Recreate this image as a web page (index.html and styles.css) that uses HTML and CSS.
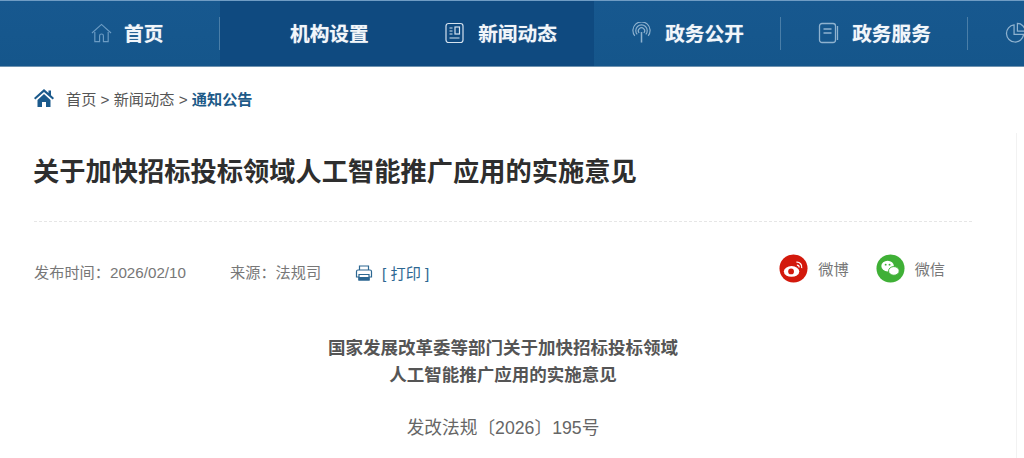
FILE: index.html
```html
<!DOCTYPE html>
<html lang="zh-CN">
<head>
    <meta charset="UTF-8">
    <title>关于加快招标投标领域人工智能推广应用的实施意见</title>
    <link rel="stylesheet" href="styles.css">
</head>
<body>
    <div class="nav">
        <div class="nav-item first sep">
            <svg class="nav-icon" viewBox="0 0 22 22" fill="none" stroke="#6c9cc4" stroke-width="1.2"><path d="M1 11 11 2l10 9"/><path d="M4 10v10h5v-6q0-2 2-2t2 2v6h5V10"/></svg>
            <span>首页</span>
        </div>
        <div class="nav-item dark plain"><span>机构设置</span></div>
        <div class="nav-item dark">
            <svg class="nav-icon" viewBox="0 0 20 22" fill="none" stroke="#d5e2ee" stroke-width="1.2"><rect x="1.5" y="1.5" width="17" height="19" rx="2.5"/><path d="M5 6h3M5 9h3M5 12h3M5 16h10"/><rect x="10.5" y="5" width="4.500" height="7"/></svg>
            <span>新闻动态</span>
        </div>
        <div class="nav-item sep">
            <svg class="nav-icon" viewBox="0 0 22 22" fill="none" stroke="#8fb2cf" stroke-width="1.2"><path d="M4 14a9 9 0 1 1 14 0"/><path d="M6.500 12.500a6 6 0 1 1 9 0"/><path d="M8.500 11a3.300 3.300 0 1 1 5 0"/><path d="M11 10v11" stroke-width="1.600"/></svg>
            <span>政务公开</span>
        </div>
        <div class="nav-item sep">
            <svg class="nav-icon" viewBox="0 0 20 22" fill="none" stroke="#8fb2cf" stroke-width="1.3"><rect x="1" y="1.500" width="16" height="19" rx="2.500"/><path d="M5 7h8M5 11h8M19 4v14"/></svg>
            <span>政务服务</span>
        </div>
        <div class="nav-item last">
            <svg class="nav-icon" viewBox="0 0 22 22" fill="none" stroke="#8fb2cf" stroke-width="1.3"><path d="M9.500 2.500a9 9 0 1 0 10 10h-10z"/><path d="M13 1v8h8a8 8 0 0 0-8-8z"/></svg>
        </div>
    </div>

    <div class="page">
        <div class="crumb">
            <svg class="crumb-icon" viewBox="0 0 20 18" fill="#1b5a8c"><path d="M10 0 0 9l1.300 1.400L10 3l8.700 7.400L20 9l-3-2.700V1.500h-2.500v2.500z"/><path d="M3.500 11 10 5l6.500 6v7h-4.500v-5H8v5H3.500z"/></svg>
            <span>首页 &gt; 新闻动态 &gt; </span><b>通知公告</b>
        </div>
        <h1 class="title">关于加快招标投标领域人工智能推广应用的实施意见</h1>
        <div class="meta">
            <span class="time">发布时间：2026/02/10</span>
            <span class="source">来源：法规司</span>
            <svg class="print-icon" viewBox="0 0 18 16" fill="none" stroke="#2c6792" stroke-width="1.200"><path d="M4.500 5V1h9v4"/><path d="M4 12H1.500V6.500q0-1.500 1.500-1.500h12q1.500 0 1.500 1.500V12H14"/><path d="M4 9.500h10V15H4z"/><path d="M4 12.500h10V15H4z" fill="#2c6792"/></svg>
            <span class="print">[ 打印 ]</span>
            <div class="share">
                <svg class="share-icon" viewBox="0 0 30 30"><circle cx="15" cy="15" r="14.500" fill="#d3190c"/><ellipse cx="13" cy="18" rx="8" ry="5.500" fill="#fff"/><circle cx="12.500" cy="18" r="3" fill="#d3190c"/><path d="M18 8.500a5 5 0 0 1 5.500 6M18.500 11.500a2.200 2.200 0 0 1 2.300 2.500" fill="none" stroke="#fff" stroke-width="1.300"/></svg>
                <span class="share-text gap">微博</span>
                <svg class="share-icon" viewBox="0 0 30 30"><circle cx="15" cy="15" r="14.500" fill="#3fb036"/><ellipse cx="12" cy="12.500" rx="6.500" ry="5.500" fill="#fff"/><ellipse cx="18.500" cy="17.500" rx="5.500" ry="4.500" fill="#fff" stroke="#3fb036"/><circle cx="10" cy="11" r="1" fill="#3fb036"/><circle cx="14" cy="11" r="1" fill="#3fb036"/></svg>
                <span class="share-text">微信</span>
            </div>
        </div>
        <div class="article">
            <p class="article-title">国家发展改革委等部门关于加快招标投标领域<br>人工智能推广应用的实施意见</p>
            <p class="doc-no">发改法规〔2026〕195号</p>
        </div>
    </div>
    <div class="side-line"></div>
</body>
</html>
```

FILE: styles.css
```css
html, body {
    margin: 0;
    height: 458px;
    overflow: hidden;
    background: #fff;
    font-family: "Liberation Sans", "Noto Sans CJK SC", sans-serif;
}
body {
    position: relative;
}
.nav {
    display: flex;
    height: 67px;
    box-sizing: border-box;
    background: linear-gradient(#17588f, #15568b);
    border-top: 1px solid #6f9cc4;
    border-bottom: 1px solid #6f93b0;
    overflow: hidden;
}
.nav-item {
    flex: 0 0 187px;
    height: 65px;
    padding-bottom: 2px;
    box-sizing: border-box;
    display: flex;
    align-items: center;
    justify-content: center;
    gap: 13px;
    position: relative;
    color: #f2f6fa;
    font-size: 19.700px;
    font-weight: bold;
    text-shadow: 0 0 1px rgba(255,255,255,.5);
}
.nav-item.first {
    flex-basis: 220px;
    justify-content: flex-start;
    padding-left: 91px;
    gap: 12px;
}
.nav-item.dark {
    background: #0f4a80;
}
.nav-item.plain {
    justify-content: flex-start;
    padding-left: 70px;
}
.nav-item.last {
    flex: 1;
    justify-content: flex-start;
    padding-left: 37px;
}
.nav-item.sep::after {
    content: "";
    position: absolute;
    right: 0;
    top: 16px;
    height: 33px;
    width: 1px;
    background: #4a7ea8;
}
.nav-icon {
    width: 21px;
    height: 22px;
    flex: none;
}
.page {
    padding: 0 0 0 34px;
}
.crumb {
    display: flex;
    align-items: center;
    height: 30px;
    margin-top: 16px;
    font-size: 15.200px;
    color: #555;
    white-space: pre;
}
.crumb-icon {
    width: 20px;
    height: 18px;
    margin-right: 12px;
}
.crumb b {
    color: #1d5a88;
    font-weight: bold;
}
.title {
    margin: 43px 0 0;
    font-size: 26.250px;
    line-height: 32px;
    color: #2e2e2e;
    font-weight: bold;
    height: 33px;
    padding-bottom: 32px;
    width: 938px;
    border-bottom: 1px dashed #e6e6e6;
    text-indent: -1px;
}
.meta {
    display: flex;
    align-items: center;
    width: 938px;
    height: 30px;
    margin-top: 34px;
    font-size: 15.200px;
    color: #777;
}
.time {
    width: 196px;
}
.source {
    width: 125px;
}
.print-icon {
    width: 18px;
    height: 16px;
    margin-right: 9px;
    margin-top: 4px;
}
.print {
    color: #2c6792;
    margin-top: 2px;
}
.share {
    margin-left: auto;
    margin-right: 27px;
    display: flex;
    align-items: center;
    margin-top: -6px;
}
.share-icon {
    width: 29px;
    height: 29px;
    margin-right: 10px;
}
.share-text {
    font-size: 15.200px;
    color: #777;
}
.share-text.gap {
    margin-right: 27px;
}
.article {
    width: 938px;
    text-align: center;
    margin-top: 49px;
}
.article-title {
    margin: 0;
    font-size: 17.500px;
    line-height: 27px;
    font-weight: bold;
    color: #555;
}
.doc-no {
    margin: 26px 0 0;
    font-size: 17.700px;
    line-height: 26px;
    color: #666;
}
.side-line {
    position: absolute;
    left: 1016px;
    top: 133px;
    bottom: 0;
    width: 1px;
    background: #f2f2f2;
}
```
